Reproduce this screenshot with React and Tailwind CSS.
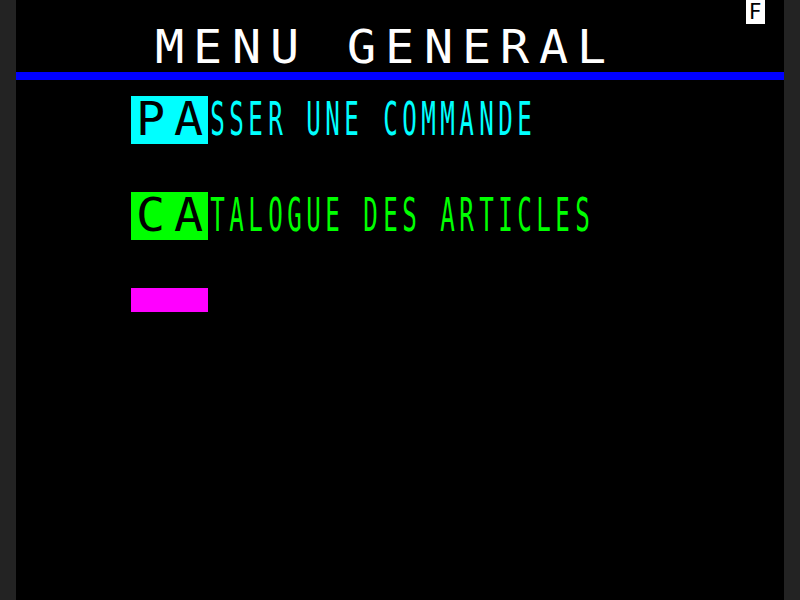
import React from "react";

// Minitel style screen: 40 columns x 25 rows, each cell 19.2 x 24 px
const CELL = {
    normal: "w-[19.2px] h-6",
    tall: "w-[19.2px] h-12",
    big: "w-[38.4px] h-12",
};

const SCALE = {
    normal: "text-[21px]",
    tall: "text-[22px] scale-x-[1.1] scale-y-[2.1]",
    big: "text-[22px] scale-x-[2.2] scale-y-[2.1]",
};

const Glyph = ({ ch, size }) => (
    <span className={`flex items-center justify-center shrink-0 overflow-visible ${CELL[size]}`}>
        <span className={`inline-block leading-none ${SCALE[size]}`}>
            {ch === " " ? "\u00a0" : ch}
        </span>
    </span>
);

const Text = ({ value, size = "tall", className = "" }) => (
    <div className={`flex ${className}`}>
        {value.split("").map((ch, i) => (
            <Glyph key={i} ch={ch} size={size} />
        ))}
    </div>
);

const MenuItem = ({ keys, label, box, color }) => (
    <div className="flex h-12">
        <div className="w-[115.2px] shrink-0" />
        <Text value={keys} size="big" className={`${box} text-black`} />
        <Text value={label} size="tall" className={color} />
    </div>
);

const App = () => {
    return (
        <div className="flex justify-center w-full h-[600px] bg-[#232323] overflow-hidden">
            <div className="flex flex-col w-[768px] h-[600px] bg-black font-['DejaVu_Sans_Mono',monospace]">
                {/* row 0 : status */}
                <div className="flex h-6">
                    <div className="w-[729.6px] shrink-0" />
                    <Text value="F" size="normal" className="bg-white text-black" />
                </div>

                {/* rows 1-2 : title */}
                <div className="flex h-12">
                    <div className="w-[134.4px] shrink-0" />
                    <Text value="MENU GENERAL" size="big" className="text-white" />
                </div>

                {/* row 3 : blue rule */}
                <div className="h-6">
                    <div className="h-2 bg-[#0000ff]" />
                </div>

                {/* rows 4-5 */}
                <MenuItem keys="PA" label="SSER UNE COMMANDE" box="bg-[#00ffff]" color="text-[#00ffff]" />

                <div className="h-12" />

                {/* rows 8-9 */}
                <MenuItem keys="CA" label="TALOGUE DES ARTICLES" box="bg-[#00ff00]" color="text-[#00ff00]" />

                <div className="h-12" />

                {/* row 12 : input field */}
                <div className="flex h-6">
                    <div className="w-[115.2px] shrink-0" />
                    <div className="w-[76.8px] bg-[#ff00ff]" />
                </div>
            </div>
        </div>
    );
};

export default App;
